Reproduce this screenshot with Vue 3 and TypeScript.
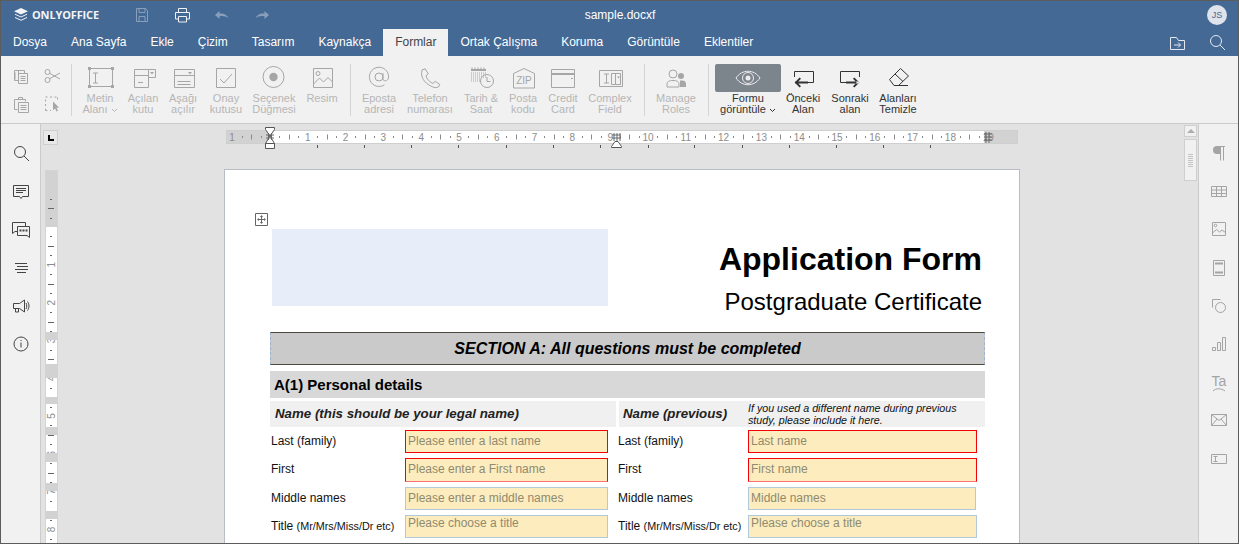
<template>
  <div class="editor">
    <header class="titlebar">
      <div class="title-left">
        <div class="logo">
          <Ico name="logo" :w="16" :h="16" />
          <span class="logo-text">ONLYOFFICE</span>
        </div>
        <button v-for="b in quickButtons" :key="b.name" class="quick" :class="{ off: b.off }">
          <Ico :name="b.name" :w="18" :h="18" />
        </button>
      </div>
      <div class="doc-name">sample.docxf</div>
      <div class="title-right"><span class="avatar">JS</span></div>
    </header>

    <nav class="tabs">
      <span v-for="t in tabs" :key="t" class="tab" :class="{ active: t === 'Formlar' }">{{ t }}</span>
      <span class="tab-tools">
        <Ico name="folder" :w="20" :h="20" />
        <Ico name="search" :w="24" :h="24" />
      </span>
    </nav>

    <section class="toolbar">
      <div class="clip">
        <span v-for="c in clipIcons" :key="c" class="clip-cell"><Ico :name="c" :w="24" :h="24" /></span>
      </div>
      <template v-for="(group, gi) in toolGroups" :key="gi">
        <i class="sep" :class="{ wide: gi > 1 }"></i>
        <div class="tool-group">
          <div
            v-for="tool in group"
            :key="tool.icon"
            class="tool"
            :class="{ on: tool.on }"
            :style="{ width: tool.w + 'px' }"
          >
            <div class="tool-icon" :class="{ pressed: tool.pressed }">
              <Ico :name="tool.icon" :w="tool.pressed ? 66 : 32" :h="28" />
            </div>
            <div class="tool-label">
              {{ tool.top }}<br>{{ tool.bottom }}<svg v-if="tool.caret" class="caret" width="7" height="5" viewBox="0 0 7 5"><path d="M1 1l2.5 2.5L6 1" fill="none" stroke="currentColor" /></svg>
            </div>
          </div>
        </div>
      </template>
    </section>

    <main class="workspace">
      <aside class="side left-side">
        <div v-for="n in leftIcons" :key="n" class="side-item"><Ico :name="n" :w="24" :h="24" /></div>
      </aside>

      <div class="canvas">
        <div class="ruler-row">
          <div class="corner"><i></i></div>
          <svg class="hruler" width="792" height="26" viewBox="0 0 792 26">
            <rect x="0.5" y="5.5" width="791" height="13" fill="#fff" stroke="#cfcfcf" />
            <rect x="1" y="6" width="43" height="12" fill="#d2d2d2" />
            <rect x="758" y="6" width="33" height="12" fill="#d2d2d2" />
            <path v-for="t in hTicks" :key="t.x" :d="t.d" stroke="#8a8a8a" fill="none" />
            <text v-for="l in hLabels" :key="l.x" :x="l.x" y="15.5" class="rnum" text-anchor="middle">{{ l.n }}</text>
            <path v-for="x in tabStops" :key="x" :d="`M${x}.5 20v3`" stroke="#555" />
            <path d="M39.5 2.5h9v2L44 11l-4.500-6.500zM39.500 18.500l4.500-7.500 4.500 7.500z" fill="#fff" stroke="#555" />
            <path d="M39.500 18.500h9v5h-9z" fill="#fff" stroke="#555" />
            <path d="M40 10h8M40 13h8M42.500 8v7M45.500 8v7" stroke="#666" fill="none" />
            <path d="M386 10h9M386 13h9M388 8v8M391 8v8M394 8v8" stroke="#666" fill="none" />
            <path d="M385.500 21.500l3.500-5h3l3.500 5v1h-10z" fill="#fff" stroke="#555" />
            <path d="M758 9h8M758 12h8M758 15h8M760 7v11M763 7v11" stroke="#666" fill="none" />
          </svg>
        </div>

        <div class="doc-row">
          <svg class="vruler" width="14" height="374" viewBox="0 0 14 374">
            <rect x="0.5" y="0.5" width="12" height="373" fill="#fff" stroke="#d4d4d4" />
            <rect x="1" y="1" width="11" height="56" fill="#d2d2d2" />
            <path v-for="t in vTicks" :key="t" :d="t" stroke="#666" fill="none" />
            <text
              v-for="l in vLabels"
              :key="l.n"
              class="rnum"
              text-anchor="middle"
              :transform="`translate(9.500 ${l.y}) rotate(-90)`"
            >{{ l.n }}</text>
            <rect v-for="s in vGaps" :key="s[0]" x="0" :y="s[0]" width="13" :height="s[1]" fill="#d2d2d2" />
          </svg>

          <article class="page">
            <span class="move-handle"><Ico name="move" :w="13" :h="13" /></span>
            <div class="page-head">
              <div class="logo-slot"></div>
              <div class="page-title">
                <h1>Application Form</h1>
                <h2>Postgraduate Certificate</h2>
              </div>
            </div>

            <div class="form">
              <div class="section-band">SECTION A: All questions must be completed</div>
              <div class="sub-band">A(1) Personal details</div>

              <div class="name-heads">
                <div class="name-head">Name (this should be your legal name)</div>
                <div class="name-head name-prev">
                  <span class="prev-title">Name (previous)</span>
                  <span class="prev-hint">If you used a different name during previous study, please include it here.</span>
                </div>
              </div>

              <div class="fields">
                <div v-for="row in rows" :key="row.label" class="field-row" :class="row.kind">
                  <div class="field-side">
                    <span class="field-label">{{ row.label }}&nbsp;<small v-if="row.small">{{ row.small }}</small></span>
                    <span class="field-input">{{ row.leftHint }}</span>
                  </div>
                  <div class="field-side right">
                    <span class="field-label">{{ row.label }}&nbsp;<small v-if="row.small">{{ row.small }}</small></span>
                    <span class="field-input">{{ row.rightHint }}</span>
                  </div>
                </div>
              </div>
            </div>
          </article>
        </div>
      </div>

      <div class="scrollbar">
        <div class="sb-up"><i></i></div>
        <div class="sb-thumb"><i v-for="n in 7" :key="n"></i></div>
      </div>

      <aside class="side right-side">
        <div v-for="n in rightIcons" :key="n" class="side-item"><Ico :name="n" :w="24" :h="24" /></div>
      </aside>
    </main>
  </div>
</template>

<script setup lang="ts">
import { h } from 'vue'
import type { FunctionalComponent } from 'vue'

interface IconDef {
  s?: string[]
  f?: string[]
  t?: { x: number; y: number; size: number; text: string }
}

interface Tool {
  icon: string
  top: string
  bottom: string
  w: number
  caret?: boolean
  on?: boolean
  pressed?: boolean
}

const ring = (cx: number, cy: number, r: number) =>
  `M${cx - r} ${cy}a${r} ${r} 0 1 0 ${r * 2} 0a${r} ${r} 0 1 0 ${-r * 2} 0z`

const dots = (x: number, y: number, n: number) => {
  let d = ''
  for (let i = 0; i < n; i++) d += `M${x + i * 2} ${y}h1`
  return d
}

const icons: Record<string, IconDef> = {
  logo: {
    f: ['M8 1l7 3.2L8 7.400 1 4.200z'],
    s: ['M2 7.200l6 2.800 6-2.800', 'M2 10.500l6 2.800 6-2.800'],
  },
  save: { s: ['M3.500 2.500h9l2 2v11h-11z', 'M6 2.500v4h6v-4', 'M6 15.500v-5h6v5'] },
  print: { s: ['M5.500 6V2.500h8V6', 'M5 13H2.500V6.500h14V13H14', 'M5.500 10.500h8v5.500h-8z'] },
  undo: { f: ['M2 9l4.500-4v2.600c4-.6 7.500 1 9 4.600-2.500-2-5.500-2.600-9-2V13z'] },
  redo: { f: ['M16 9l-4.500-4v2.600c-4-.6-7.500 1-9 4.600 2.500-2 5.500-2.600 9-2V13z'] },
  folder: { s: ['M3.500 5.500h6l2 3h6v9h-14z', 'M7 13h6.500', 'M11 10.500l2.500 2.500-2.500 2.500'] },
  search: { s: [ring(11, 11, 5.5), 'M15 15l5 5'] },
  copy: { s: ['M7.500 6.500h8v3', 'M6 8.500v7', 'M9.500 9.500h9v10h-9z', 'M11.500 12.500h5M11.500 14.500h5M11.500 16.500h5', 'M5.500 6.500h4v10h-4z'] },
  paste: { s: ['M9.500 5.500h4v2h-4z', 'M5.500 7.500h11v2', 'M5.500 7.500v10h3', 'M9.500 10.500h10v10h-10z', 'M11.500 13.500h6M11.500 15.500h6M11.500 17.500h6'] },
  cut: { s: [ring(7.5, 8, 2.5), ring(7.5, 16, 2.5), 'M10 9.500l10 5.500', 'M10 14.500l10-5.500'] },
  select: {
    s: ['M5.500 5h2M10 5h2M14.500 5h2M17.500 5.500v2M5.500 7.500v2M5.500 12v2M5.500 16.500v2h2M10 18.500h1'],
    f: ['M13 9.500l6 6-2.500.2 1.500 3-1.500.7-1.400-3-2.100 1.800z'],
  },
  metin: {
    s: ['M5.500 4.500h23v18h-23z', 'M9 9h5M11.500 9v10M9 19h5'],
    f: ['M4 3h3v3H4zM27 3h3v3h-3zM4 21h3v3H4zM27 21h3v3h-3z'],
  },
  combo: {
    s: ['M7.500 5.500h14v18h-14z', 'M21.500 5.500h7v8h-7z', 'M7.500 11.500h14', 'M11 18.500h5'],
    f: ['M23 8h4l-2 2.500z'],
  },
  drop: {
    s: ['M7.500 5.500h20v18h-20z', 'M7.500 11.500h20', 'M10.500 17.500h13M10.500 20.500h13'],
    f: ['M21 8h4l-2 2.500z'],
  },
  check: { s: ['M6.500 4.500h19v19h-19z', 'M10 15l4 4 8-9'] },
  radio: { s: [ring(15.5, 13, 10.5)], f: [ring(15.5, 13, 4.2)] },
  picture: { s: ['M7.500 4.500h19v19h-19z', ring(12, 9.5, 2), 'M7.500 20l6-6 4 4 4.500-4.500 4.500 4.500'] },
  at: { s: [ring(16, 13, 4), 'M20 9v6c0 2.800 5.600 2.600 5.600-2.200a9.600 9.600 0 1 0-4.200 8'] },
  phone: { s: ['M8 6l3.200-1.200 3 5-2.200 2c1 3.600 3.600 6.400 7 7.600l2.200-2 4.600 3-1.200 2.400c-2.200 1.400-5 1-8-1C10.400 19 6.200 13 8 6z'] },
  date: {
    s: [ring(22, 17, 6.5), 'M22 13v4.500h3.500', 'M7 3.500v2M10 3.500v2M13 3.500v2M16 3.500v2M19 3.500v2'],
    f: ['M6 5h15v2H6z'],
  },
  zip: {
    s: ['M6.500 9.500L17 4.500l10.500 5v14.500h-21z'],
    t: { x: 17, y: 20, size: 10, text: 'ZIP' },
  },
  card: { s: ['M4.500 5.500h23v18h-23z', 'M24 14.500h2'], f: ['M5 9h22v2H5z'] },
  complex: {
    s: ['M5.500 6.500h23v16h-23z', 'M10 10h5M12.500 10v9M10 19h5', 'M17.500 9.500h9v11h-9z', 'M21.500 9.500v11'],
    f: ['M23 12.500h3l-1.500 2z'],
  },
  roles: {
    s: [ring(13, 10, 4), 'M7 23v-3c0-2.500 2.500-3.500 6-3.500s6 1 6 3.500v3z'],
    f: [ring(21, 12, 3), 'M20 16.500h2c3 0 4 1.700 4 3.500v3h-6z'],
  },
  eye: {
    s: ['M21 14c6-9 18-9 24 0-6 9-18 9-24 0z', ring(33, 14, 5.5)],
    f: [ring(33, 14, 2.5)],
  },
  prev: { s: ['M7.500 13V7.500h19v11H20'], f: ['M8 17.500h13v2H8zM12.600 13.400l1.400 1.400-3.700 3.700 3.700 3.700-1.400 1.400-5-5.100z'] },
  next: { s: ['M25.500 13V7.500h-19v11H13'], f: ['M12 17.500h13v2H12zM20.400 13.400L19 14.800l3.700 3.700-3.700 3.700 1.400 1.400 5-5.100z'] },
  eraser: { s: ['M7.500 15.500L18.500 4.500l8 7.500L16.500 21.500h-4.500z', 'M13 10l8 7.500', 'M12 21.500h14'] },
  comment: { s: ['M4.500 6.500h15v11h-6l-1.500 2-1.500-2h-6z', 'M7 9.500h10M7 11.500h10M7 13.500h7'] },
  chat: {
    s: ['M16.500 9V5.500h-13v11l2.500-2h2', 'M8.500 9.500h12v11l-2.500-2h-9.500z'],
    f: ['M10.500 12.500h2v2h-2zM13.500 12.500h2v2h-2zM16.500 12.500h2v2h-2z'],
  },
  nav: { s: ['M6 7.500h12M8 10.500h11M6 13.500h13M8 16.500h9'] },
  speak: {
    s: ['M4.500 9.500h6l5-3.500v12l-5-3.500h-6z', 'M6.500 14.500v3.500h3v-3.500', 'M17 9c1 2 1 4 0 6', 'M18.500 7.500c2 3 2 6 0 9'],
  },
  info: { s: [ring(12, 12, 7), 'M12 10.500v5'], f: ['M11.500 8h1v1h-1z'] },
  move: {
    s: ['M.5.5h12v12H.5z', 'M6.500 3v7M3 6.500h7'],
    f: ['M6.500 2l1.600 2H4.900zM6.500 11L4.900 9h3.200zM2 6.500l2-1.600v3.200zM11 6.500L9 4.900v3.200z'],
  },
  para: { s: ['M13.500 5.500V19.500M16.500 5.500V19.500M10 5.500h8'], f: ['M13 5h-3a4 4 0 0 0 0 8h3z'] },
  table: { s: ['M4.500 7.500h15v10h-15z', 'M4.500 11h15M4.500 14.500h15M9.500 7.500v10M14.500 7.500v10'] },
  image: { s: ['M5.500 5.500h13v13h-13z', ring(8.5, 8.5, 1.3), 'M5.500 16l4-3.500 3 2.500 2.500-2 3.500 2.500'] },
  header: { s: ['M6.500 4.500h11v15h-11z'], f: ['M8 6.500h8v2H8zM8 15.500h8v2H8z'] },
  shape: { s: ['M5.500 13.500v-8h8', ring(13.5, 13.5, 5)] },
  chart: { s: ['M5.500 15.500h3v3h-3z', 'M10.500 10.500h3v8h-3z', 'M15.500 5.500h3v13h-3z'] },
  textart: { s: ['M6 21c3-3 8-3 12 0'], t: { x: 12, y: 16, size: 14, text: 'Ta' } },
  mail: { s: ['M4.500 6.500h15v11h-15z', 'M4.500 6.500l7.500 6 7.500-6', 'M4.500 17.500l5.500-6.500M19.500 17.500l-5.500-6.500'] },
  form: { s: ['M4.500 7.500h15v9h-15z', 'M6.500 9.500h4M8.500 9.500v5M6.500 14.500h4'] },
}

const Ico: FunctionalComponent<{ name: string; w: number; h: number }> = (props) => {
  const def = icons[props.name]
  const kids = [
    ...(def.s ?? []).map((d) => h('path', { d, fill: 'none', stroke: 'currentColor' })),
    ...(def.f ?? []).map((d) => h('path', { d, fill: 'currentColor' })),
  ]
  if (props.name === 'date') {
    for (let y = 9; y < 19; y += 2) {
      kids.push(h('path', { d: dots(6, y, y > 13 ? 5 : 8), stroke: 'currentColor', fill: 'none' }))
    }
  }
  if (def.t) {
    kids.push(
      h(
        'text',
        {
          x: def.t.x,
          y: def.t.y,
          fill: 'currentColor',
          'font-size': def.t.size,
          'font-family': '"Liberation Sans", Arial, sans-serif',
          'text-anchor': 'middle',
        },
        def.t.text,
      ),
    )
  }
  return h(
    'svg',
    { width: props.w, height: props.h, viewBox: `0 0 ${props.w} ${props.h}`, style: 'display:block' },
    kids,
  )
}
Ico.props = ['name', 'w', 'h']

const quickButtons = [
  { name: 'save', off: true },
  { name: 'print', off: false },
  { name: 'undo', off: true },
  { name: 'redo', off: true },
]

const tabs = [
  'Dosya', 'Ana Sayfa', 'Ekle', 'Çizim', 'Tasarım', 'Kaynakça', 'Formlar',
  'Ortak Çalışma', 'Koruma', 'Görüntüle', 'Eklentiler',
]

const clipIcons = ['copy', 'cut', 'paste', 'select']

const toolGroups: Tool[][] = [
  [
    { icon: 'metin', top: 'Metin', bottom: 'Alanı', w: 44, caret: true },
    { icon: 'combo', top: 'Açılan', bottom: 'kutu', w: 42 },
    { icon: 'drop', top: 'Aşağı', bottom: 'açılır', w: 38 },
    { icon: 'check', top: 'Onay', bottom: 'kutusu', w: 48 },
    { icon: 'radio', top: 'Seçenek', bottom: 'Düğmesi', w: 48 },
    { icon: 'picture', top: 'Resim', bottom: '', w: 48 },
  ],
  [
    { icon: 'at', top: 'Eposta', bottom: 'adresi', w: 44 },
    { icon: 'phone', top: 'Telefon', bottom: 'numarası', w: 58 },
    { icon: 'date', top: 'Tarih &', bottom: 'Saat', w: 44 },
    { icon: 'zip', top: 'Posta', bottom: 'kodu', w: 40 },
    { icon: 'card', top: 'Credit', bottom: 'Card', w: 40 },
    { icon: 'complex', top: 'Complex', bottom: 'Field', w: 54 },
  ],
  [{ icon: 'roles', top: 'Manage', bottom: 'Roles', w: 50 }],
  [
    { icon: 'eye', top: 'Formu', bottom: 'görüntüle', w: 66, caret: true, on: true, pressed: true },
    { icon: 'prev', top: 'Önceki', bottom: 'Alan', w: 44, on: true },
    { icon: 'next', top: 'Sonraki', bottom: 'alan', w: 50, on: true },
    { icon: 'eraser', top: 'Alanları', bottom: 'Temizle', w: 46, on: true },
  ],
]

const leftIcons = ['search', 'comment', 'chat', 'nav', 'speak', 'info']
const rightIcons = ['para', 'table', 'image', 'header', 'shape', 'chart', 'textart', 'mail', 'form']

// rulers: one centimetre is 37.8px, origin is the page margin
const CM = 37.8
const hOrigin = 44

const hTicks: { x: number; d: string }[] = []
for (let i = -4; i <= 75; i++) {
  if (i % 4 === 0) continue
  const x = Math.round(hOrigin + (i * CM) / 4) + 0.5
  if (x < 2 || x > 790) continue
  const half = ((i % 4) + 4) % 4 === 2
  hTicks.push({ x, d: half ? `M${x} 9.500v5` : `M${x} 11v2` })
}

const hLabels = [{ n: 1, x: 6 }]
for (let n = 1; n <= 19; n++) hLabels.push({ n, x: hOrigin + n * CM })

const tabStops = [91, 138, 185, 232, 280, 327, 374, 422, 468, 516, 563, 610, 657, 704]

const vOrigin = 57
const vTicks: string[] = []
for (let i = -4; i <= 34; i++) {
  if (i % 4 === 0) continue
  const y = Math.round(vOrigin + (i * CM) / 4) + 0.5
  if (y < 2) continue
  vTicks.push(((i % 4) + 4) % 4 === 2 ? `M3 ${y}h6` : `M5 ${y}h2`)
}
const vLabels: { n: number; y: number }[] = []
for (let n = 1; n <= 8; n++) vLabels.push({ n, y: vOrigin + n * CM })

const vGaps: [number, number][] = [
  [162, 8], [194, 14], [227, 7], [257, 8], [283, 9], [313, 8], [341, 8],
]

const rows = [
  { label: 'Last (family)', small: '', leftHint: 'Please enter a last name', rightHint: 'Last name', kind: 'req' },
  { label: 'First', small: '', leftHint: 'Please enter a First name', rightHint: 'First name', kind: 'req tall' },
  { label: 'Middle names', small: '', leftHint: 'Please enter a middle names', rightHint: 'Middle names', kind: 'opt mid' },
  { label: 'Title', small: '(Mr/Mrs/Miss/Dr etc)', leftHint: 'Please choose a title', rightHint: 'Please choose a title', kind: 'opt top' },
]
</script>

<style scoped>
.editor {
  box-sizing: border-box;
  width: 1239px;
  height: 544px;
  border: 1px solid #5c5c5c;
  display: flex;
  flex-direction: column;
  overflow: hidden;
  font-family: "Liberation Sans", Arial, sans-serif;
  background: #e2e2e2;
}

.titlebar {
  flex: none;
  height: 27px;
  display: flex;
  align-items: center;
  background: #446995;
  color: #fff;
}

.title-left,
.title-right {
  box-sizing: border-box;
  flex: 1 1 0;
  display: flex;
  align-items: center;
}

.title-right {
  justify-content: flex-end;
  padding-right: 11px;
}

.logo {
  width: 109px;
  margin-left: 12px;
  display: flex;
  align-items: center;
  gap: 3px;
  color: #f2f4f8;
}

.logo-text {
  font-family: "Open Sans", sans-serif;
  font-size: 11px;
  font-weight: 700;
  letter-spacing: -0.15px;
}

.quick {
  width: 40px;
  height: 26px;
  padding: 0;
  border: none;
  background: none;
  color: #eef1f5;
  display: flex;
  align-items: center;
  justify-content: center;
}

.quick.off {
  opacity: 0.4;
}

.doc-name {
  margin-left: 12px;
  font-size: 12px;
}

.avatar {
  width: 20px;
  height: 20px;
  border-radius: 50%;
  background: #dfe4ec;
  color: #446995;
  font-size: 9px;
  line-height: 20px;
  text-align: center;
}

.tabs {
  flex: none;
  height: 28px;
  display: flex;
  background: #446995;
  color: #fff;
  font-size: 12px;
}

.tab {
  padding: 0 12px;
  line-height: 28px;
}

.tab.active {
  margin-top: 1px;
  line-height: 27px;
  background: #f1f1f1;
  color: #444;
}

.tab-tools {
  margin-left: auto;
  display: flex;
  align-items: center;
  gap: 18px;
  padding-right: 9px;
  color: #e3e9f1;
}

.toolbar {
  box-sizing: border-box;
  flex: none;
  height: 68px;
  display: flex;
  background: #f1f1f1;
  border-bottom: 1px solid #cbcbcb;
  padding-top: 8px;
}

.clip {
  width: 62px;
  margin-left: 4px;
  margin-top: -2px;
  display: grid;
  grid-template-columns: 31px 31px;
  grid-auto-rows: 28px;
  color: #a6a6a6;
}

.clip-cell {
  display: flex;
  align-items: center;
  justify-content: center;
}

.sep {
  flex: none;
  width: 1px;
  height: 52px;
  margin: 0 6px 0 4px;
  background: #d4d4d4;
}

.sep.wide {
  margin-left: 7px;
}

.tool-group {
  display: flex;
}

.tool {
  flex: none;
  color: #a6a6a6;
  text-align: center;
}

.tool.on {
  color: #333;
}

.tool-icon {
  height: 28px;
  display: flex;
  justify-content: center;
}

.tool-icon.pressed {
  background: #7d858c;
  color: #ecedee;
  border-radius: 2px;
}

.tool-label {
  margin-top: 1px;
  font-size: 11px;
  line-height: 11px;
  color: #b6b6b6;
  white-space: nowrap;
}

.tool.on .tool-label {
  color: #333;
}

.caret {
  margin-left: 3px;
}

.workspace {
  flex: 1;
  min-height: 0;
  display: flex;
}

.side {
  flex: none;
  box-sizing: border-box;
  background: #f1f1f1;
  padding-top: 10px;
}

.left-side {
  width: 40px;
  border-right: 1px solid #cbcbcb;
  color: #444;
}

.right-side {
  width: 40px;
  border-left: 1px solid #cbcbcb;
  color: #a4a4a4;
}

.side-item {
  height: 38.2px;
  display: flex;
  align-items: center;
  justify-content: center;
}

.canvas {
  flex: 1;
  min-width: 0;
  overflow: hidden;
  background: #e2e2e2;
}

.ruler-row {
  display: flex;
  margin-top: 1px;
  height: 26px;
}

.corner {
  box-sizing: border-box;
  flex: none;
  width: 15px;
  height: 15px;
  margin: 5px 0 0 2px;
  background: #e8e8e8;
  border: 1px solid #cfcfcf;
  position: relative;
}

.corner i {
  position: absolute;
  left: 4px;
  top: 4px;
  width: 4px;
  height: 4px;
  border-left: 2px solid #000;
  border-bottom: 2px solid #000;
}

.hruler {
  flex: none;
  margin-left: 168px;
}

.rnum {
  font-family: "Liberation Sans", Arial, sans-serif;
  font-size: 10px;
  fill: #8c8c8c;
}

.doc-row {
  display: flex;
  align-items: flex-start;
  margin-top: 18px;
}

.vruler {
  flex: none;
  margin: 1px 0 0 4px;
}

.page {
  position: relative;
  box-sizing: border-box;
  flex: none;
  width: 796px;
  min-height: 400px;
  margin-left: 165px;
  background: #fff;
  border: 1px solid #b8bdc5;
  padding-top: 59px;
}

.move-handle {
  position: absolute;
  left: 30px;
  top: 43px;
  color: #666;
}

.page-head {
  height: 77px;
  display: flex;
  justify-content: space-between;
  padding: 0 37px 0 47px;
}

.logo-slot {
  width: 336px;
  background: #e8eef9;
}

.page-title {
  text-align: right;
  color: #000;
  margin-top: 10px;
  white-space: nowrap;
}

.page-title h1 {
  margin: 0;
  font-size: 32px;
  line-height: 40px;
  font-weight: 700;
}

.page-title h2 {
  margin: 8px 0 0;
  font-size: 24px;
  line-height: 30px;
  font-weight: 400;
}

.form {
  width: 715px;
  margin: 26px 0 0 45px;
  color: #111;
}

.section-band {
  box-sizing: border-box;
  height: 33px;
  background: #cacaca;
  border-top: 1px solid #4d4a3c;
  border-bottom: 1px solid #4d4a3c;
  border-left: 1px dashed #9db3d0;
  border-right: 1px dashed #9db3d0;
  text-align: center;
  font-size: 16px;
  line-height: 31px;
  font-weight: 700;
  font-style: italic;
  color: #000;
}

.sub-band {
  height: 27px;
  margin-top: 6px;
  padding-left: 4px;
  background: #d8d8d8;
  font-size: 15px;
  line-height: 27px;
  font-weight: 700;
  color: #000;
}

.name-heads {
  display: grid;
  grid-template-columns: 346px 366px;
  gap: 3px;
  margin-top: 3px;
}

.name-head {
  height: 26px;
  padding-left: 5px;
  background: #f0f0f0;
  font-size: 13.3px;
  line-height: 26px;
  font-weight: 700;
  font-style: italic;
  color: #222;
  white-space: nowrap;
}

.name-prev {
  display: flex;
  padding-left: 4px;
}

.prev-title {
  width: 125px;
  flex: none;
}

.prev-hint {
  width: 232px;
  font-size: 10.7px;
  line-height: 12px;
  font-weight: 400;
  white-space: normal;
  color: #111;
  margin-top: 1px;
}

.fields {
  margin-top: 3px;
  display: flex;
  flex-direction: column;
  gap: 5px;
}

.field-row {
  height: 23px;
  display: grid;
  grid-template-columns: 348px 367px;
}

.field-row.tall {
  height: 24px;
}

.field-side {
  display: flex;
}

.field-label {
  flex: none;
  width: 134px;
  padding-left: 1px;
  font-size: 12px;
  line-height: 22px;
  white-space: nowrap;
}

.field-label small {
  font-size: 10.8px;
}

.tall .field-label {
  line-height: 23px;
}

.field-input {
  box-sizing: border-box;
  width: 203px;
  height: 100%;
  padding-left: 2px;
  background: #fdedbe;
  border: 1px solid #b2c9d9;
  color: #8f8a70;
  font-size: 12px;
  line-height: 20px;
  white-space: nowrap;
}

.tall .field-input {
  line-height: 21px;
}

.field-side.right .field-label {
  width: 130px;
  padding-left: 0;
}

.field-side.right .field-input {
  width: 229px;
}

.mid .field-side.right .field-input {
  width: 228px;
}

.req .field-input {
  border-color: #f00408;
}

.req.tall .field-input {
  border-bottom-color: #ff7070;
}

.top .field-input {
  line-height: 14px;
}

.scrollbar {
  flex: none;
  width: 14px;
  padding-top: 1px;
  background: #e2e2e2;
}

.sb-up,
.sb-thumb {
  box-sizing: border-box;
  width: 13px;
  background: #f1f1f1;
  border: 1px solid #cfcfcf;
}

.sb-up {
  height: 12px;
  position: relative;
}

.sb-up i {
  position: absolute;
  left: 2px;
  top: 3px;
  border-left: 4px solid transparent;
  border-right: 4px solid transparent;
  border-bottom: 4px solid #adadad;
}

.sb-thumb {
  height: 42px;
  margin-top: 2px;
  padding-top: 14px;
  display: flex;
  flex-direction: column;
  align-items: center;
  gap: 1px;
}

.sb-thumb i {
  width: 5px;
  height: 1px;
  background: #c4c4c4;
}
</style>

<style>
html,
body {
  margin: 0;
  overflow: hidden;
}
</style>
